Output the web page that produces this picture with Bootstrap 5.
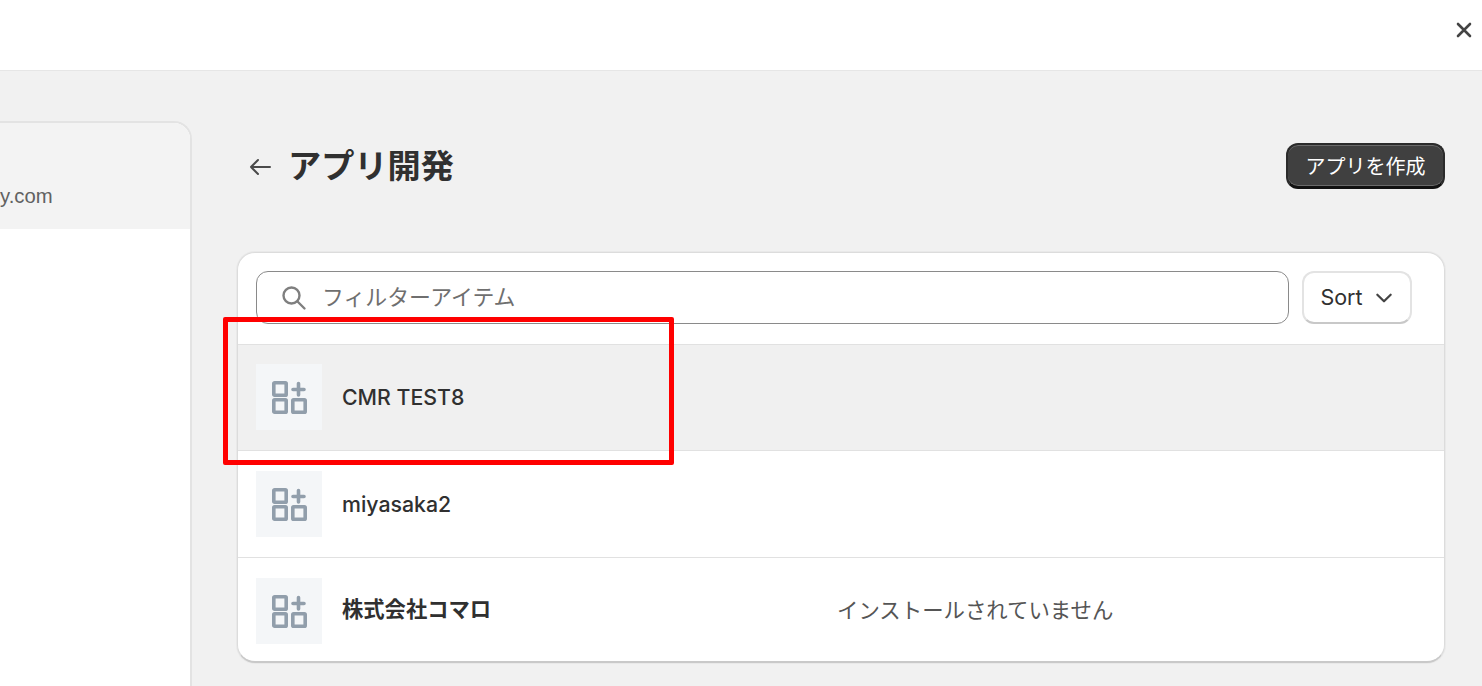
<!DOCTYPE html>
<html lang="ja">
<head>
  <meta charset="UTF-8">
  <meta name="viewport" content="width=device-width, initial-scale=1.0">
  <title>アプリ開発</title>
  <link href="https://cdn.jsdelivr.net/npm/bootstrap@5.3.0/dist/css/bootstrap.min.css" rel="stylesheet">
  <style>
    html, body { height: 686px; overflow: hidden; }
    body { background: #f1f1f1; color: #303030; font-family: Inter, "Noto Sans CJK JP", sans-serif; position: relative; }
    .top-strip { height: 71px; background: #fff; border-bottom: 1px solid #e6e6e6; padding: 0 10px 10px 0; }
    .close-x { width: 16px; height: 16px; }
    .page-body { padding-top: 50px; }
    .side-panel { width: 192px; height: 565px; background: #fff; border: 2px solid #e3e3e3; border-left: 0; border-bottom: 0; border-top-right-radius: 18px; overflow: hidden; flex-shrink: 0; }
    .side-head { height: 106px; background: #f3f3f3; padding-top: 59px; font-size: 20.3px; line-height: 28px; color: #616161; font-family: "Liberation Sans", sans-serif; }
    .main-col { width: 1208px; margin-left: 45px; }
    .title-row { height: 131px; padding: 22px 0 0 11px; }
    .back-arrow { width: 24px; height: 24px; margin: 11px 16px 0 0; }
    .page-title { font-family: "Noto Sans CJK JP", sans-serif; font-size: 33.2px; font-weight: 700; margin: -2px 0 0; line-height: 46px; color: #303030; }
    .create-btn { width: 159px; height: 46px; padding: 0; font-size: 20px; font-family: "Noto Sans CJK JP", sans-serif; color: #fff; background: #404040; border: 2px solid #2b2b2b; border-bottom: 3px solid #111; border-radius: 12px; box-shadow: inset 0 1px 0 #6a6a6a, inset 0 -1px 0 #6a6a6a; }
    .app-card { height: 411px; background: #fff; border: 1px solid #dcdcdc; border-bottom: 2px solid #c9c9c9; border-radius: 18px; box-shadow: 0 0 0 1px #e9e9e9; overflow: hidden; }
    .filter-row { height: 92px; padding: 18px 32px 0 18px; border-bottom: 1px solid #e1e1e1; gap: 13px; }
    .filter-box { height: 53px; border: 1px solid #8a8a8a; border-radius: 12px; padding: 0 0 2px 24px; font-size: 21.9px; color: #6f6f6f; font-family: "Noto Sans CJK JP", sans-serif; }
    .search-ico { width: 26px; height: 26px; margin: 2px 15px 0 0; }
    .sort-btn { width: 110px; height: 53px; padding: 0; font-size: 21.5px; color: #303030; background: #fff; border: 2px solid #e3e3e3; border-bottom-color: #c8c8c8; border-radius: 12px; }
    .sort-btn svg { width: 20px; height: 20px; margin-left: 11px; }
    .app-row { height: 106px; padding-left: 18px; border-bottom: 1px solid #e1e1e1; }
    .app-row.is-hover { background: #f0f0f0; padding-bottom: 2px; }
    .app-row.is-last { border-bottom: 0; height: 105px; padding-top: 1px; }
    .app-row.mid-row { height: 107px; }
    .app-thumb { width: 66px; height: 66px; background: #f4f6f8; margin-right: 20px; flex-shrink: 0; }
    .app-thumb svg { width: 38px; height: 38px; }
    .app-name { width: 495px; padding-top: 2px; font-size: 21.3px; font-weight: 500; color: #303030; font-family: Inter, "Noto Sans CJK JP", sans-serif; }
    .app-name.is-cjk { font-weight: 700; padding: 0 0 3px; }
    .app-status { padding-bottom: 3px; font-size: 21.4px; color: #555; font-family: "Noto Sans CJK JP", sans-serif; }
    .red-mark { position: absolute; left: 223px; top: 317px; width: 451px; height: 148px; border: 5px solid #f00; border-radius: 2px; pointer-events: none; }
  </style>
</head>
<body>
  <svg width="0" height="0" class="d-block">
    <symbol id="app-ico" viewBox="0 0 38 38">
      <g fill="none" stroke="#919eab" stroke-width="3.6">
        <rect x="3.8" y="4.8" width="12.4" height="12.4" rx="0.8"/>
        <rect x="3.8" y="21.8" width="12.4" height="12.4" rx="0.8"/>
        <rect x="22.8" y="21.8" width="12.4" height="12.4" rx="0.8"/>
        <path d="M23 11.5h11M28.500 5.500v11.500" stroke-linecap="round"/>
      </g>
    </symbol>
  </svg>

  <div class="top-strip d-flex justify-content-end align-items-center">
    <svg class="close-x" viewBox="0 0 16 16"><path d="M2 2l12 12M14 2L2 14" stroke="#444" stroke-width="2.6" stroke-linecap="round"/></svg>
  </div>

  <div class="page-body d-flex">
    <div class="side-panel">
      <div class="side-head">y.com</div>
    </div>

    <div class="main-col">
      <div class="title-row d-flex align-items-start">
        <svg class="back-arrow" viewBox="0 0 24 24"><path d="M22 13H3M10 6l-7 7 7 7" fill="none" stroke="#4a4a4a" stroke-width="2" stroke-linecap="round" stroke-linejoin="round"/></svg>
        <h1 class="page-title">アプリ開発</h1>
        <button class="create-btn ms-auto" type="button">アプリを作成</button>
      </div>

      <div class="app-card">
        <div class="filter-row d-flex align-items-start">
          <div class="filter-box d-flex align-items-center flex-grow-1">
            <svg class="search-ico" viewBox="0 0 26 26"><circle cx="10.500" cy="10.500" r="8" fill="none" stroke="#7f7f7f" stroke-width="2.4"/><path d="M16.500 16.500l7 7" stroke="#7f7f7f" stroke-width="2.4" stroke-linecap="round"/></svg>
            フィルターアイテム
          </div>
          <button class="sort-btn d-flex align-items-center justify-content-center flex-shrink-0" type="button">
            Sort
            <svg viewBox="0 0 18 18"><path d="M3 6l6 6 6-6" fill="none" stroke="#444" stroke-width="2" stroke-linecap="round" stroke-linejoin="round"/></svg>
          </button>
        </div>

        <div class="app-row is-hover d-flex align-items-center">
          <div class="app-thumb d-flex align-items-center justify-content-center"><svg><use href="#app-ico"/></svg></div>
          <div class="app-name">CMR TEST8</div>
        </div>
        <div class="app-row mid-row d-flex align-items-center">
          <div class="app-thumb d-flex align-items-center justify-content-center"><svg><use href="#app-ico"/></svg></div>
          <div class="app-name">miyasaka2</div>
        </div>
        <div class="app-row is-last d-flex align-items-center">
          <div class="app-thumb d-flex align-items-center justify-content-center"><svg><use href="#app-ico"/></svg></div>
          <div class="app-name is-cjk">株式会社コマロ</div>
          <div class="app-status">インストールされていません</div>
        </div>
      </div>
    </div>
  </div>

  <div class="red-mark"></div>

  <script src="https://cdn.jsdelivr.net/npm/bootstrap@5.3.0/dist/js/bootstrap.bundle.min.js"></script>
</body>
</html>
